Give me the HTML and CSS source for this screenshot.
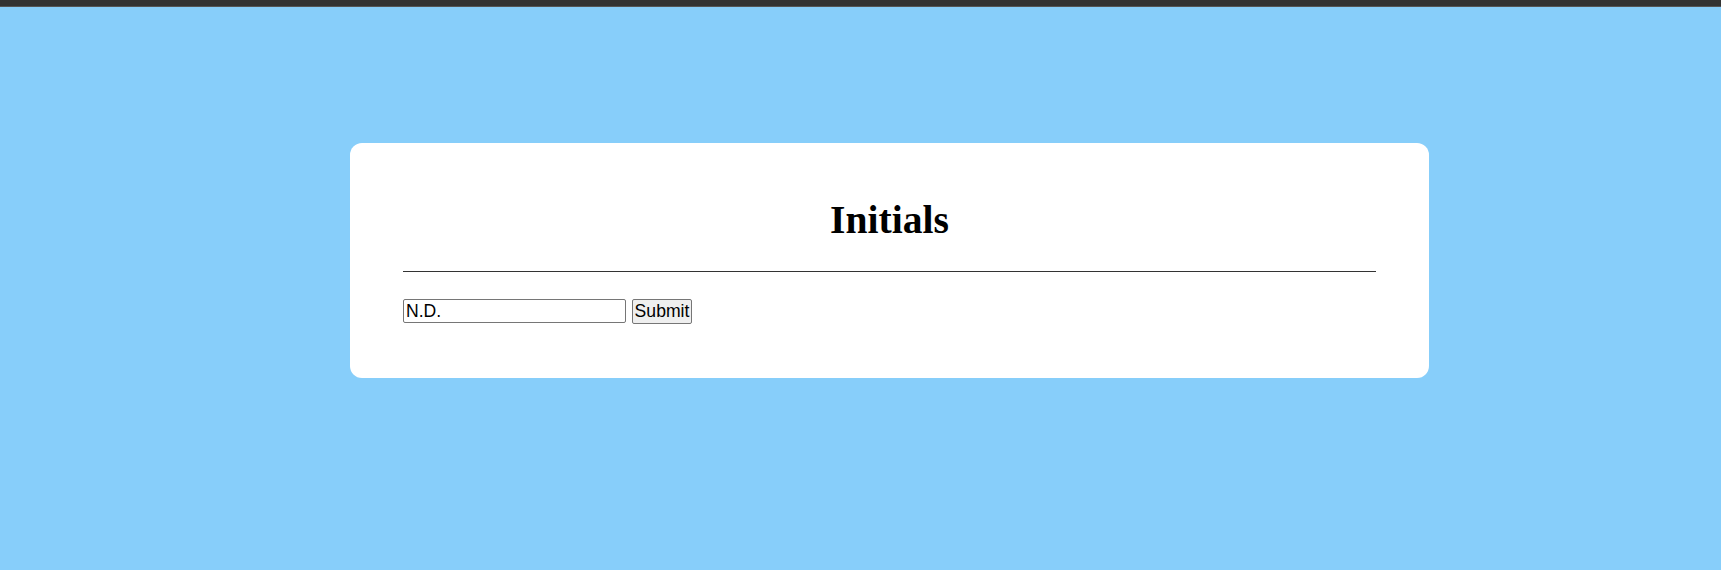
FILE: index.html
```html
<!DOCTYPE html>
<html lang="en">
<head>
<meta charset="utf-8">
<title>Initials</title>
<link rel="stylesheet" href="styles.css">
</head>
<body>
<div class="topbar"></div>
<main class="stage">
  <section class="card">
    <h1 class="title">Initials</h1>
    <form class="form">
      <input class="field" type="text" value="N.D.">
      <button class="btn" type="button">Submit</button>
    </form>
  </section>
</main>
</body>
</html>
```
FILE: styles.css
```css
html, body {
  margin: 0;
  padding: 0;
}
body {
  background: #87cefa;
  font-family: "Liberation Serif", "Times New Roman", serif;
  min-height: 570px;
}
.topbar {
  height: 6px;
  background: #333333;
  border-bottom: 1px solid #555555;
}
.stage {
  padding-top: 136px;
  padding-left: 350px;
}
.card {
  box-sizing: border-box;
  width: 1079px;
  height: 235px;
  background: #ffffff;
  border-radius: 12px;
  padding: 53px;
}
.title {
  margin: 0;
  font-size: 39.6px;
  font-weight: bold;
  line-height: 48px;
  text-align: center;
  color: #000;
  padding-bottom: 27px;
  border-bottom: 1px solid #333333;
}
.form {
  margin: 27px 0 0;
  display: flex;
  align-items: flex-start;
  gap: 6px;
}
.field {
  box-sizing: border-box;
  width: 223px;
  height: 24px;
  margin: 0;
  padding: 0 2px;
  font-family: "Liberation Sans", Arial, sans-serif;
  font-size: 17.6px;
  color: #000;
  border: 1px solid #767676;
  border-radius: 2px;
  background: #fff;
}
.btn {
  box-sizing: border-box;
  width: 60px;
  height: 25px;
  margin: 0;
  padding: 0 1px;
  font-family: "Liberation Sans", Arial, sans-serif;
  font-size: 17.6px;
  color: #000;
  background: #efefef;
  border: 1px solid #767676;
  border-radius: 2px;
}
```
